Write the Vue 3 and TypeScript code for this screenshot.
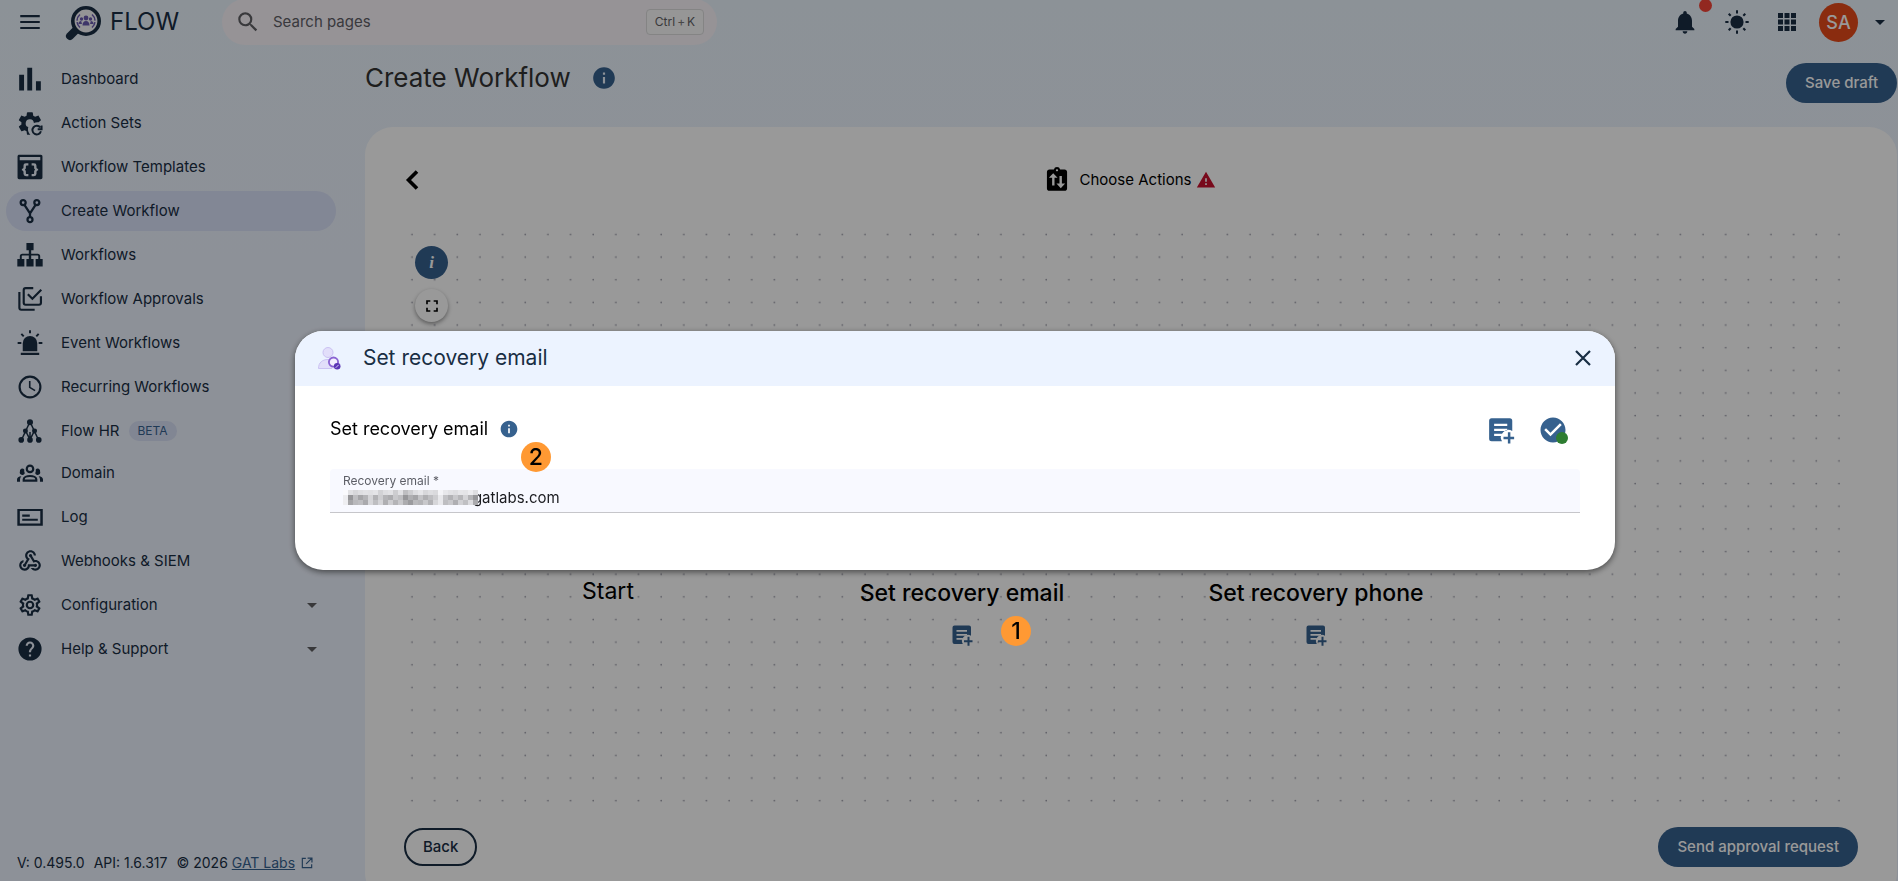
<script setup lang="ts">
import { h, ref, type FunctionalComponent } from 'vue'

interface Shape {
  d: string
  w?: number
  c?: string
}

const icons: Record<string, Shape[]> = {
  menu: [{ d: 'M3 18.500h18v-2H3zm0-5.500h18v-2H3zM3 5.500v2h18v-2z' }],
  search: [{ d: 'M15.500 14h-.79l-.28-.27A6.470 6.470 0 0 0 16 9.500 6.500 6.500 0 1 0 9.500 16c1.610 0 3.090-.59 4.230-1.570l.27.28v.79l5 4.990L20.490 19l-4.990-5zm-6 0C7.010 14 5 11.990 5 9.500S7.010 5 9.500 5 14 7.010 14 9.500 11.990 14 9.500 14z' }],
  bell: [{ d: 'M12 22c1.100 0 2-.9 2-2h-4c0 1.100.89 2 2 2zm6-6v-5c0-3.070-1.640-5.640-4.500-6.320V4c0-.83-.67-1.500-1.500-1.500s-1.500.67-1.500 1.500v.68C7.630 5.360 6 7.920 6 11v5l-2 2v1h16v-1l-2-2z' }],
  sun: [
    { d: 'M12 5.400a6.600 6.600 0 1 0 0 13.200 6.600 6.600 0 0 0 0-13.200z' },
    { d: 'M12 .3v3.200M12 20.500v3.200M.3 12h3.200M20.500 12h3.200M3.700 3.700l2 2M18.300 18.300l2 2M3.700 20.300l2-2M18.300 5.700l2-2', w: 2 },
  ],
  apps: [{ d: 'M3 3h5v5H3zM9.500 3h5v5h-5zM16 3h5v5h-5zM3 9.500h5v5H3zM9.500 9.500h5v5h-5zM16 9.500h5v5h-5zM3 16h5v5H3zM9.500 16h5v5h-5zM16 16h5v5h-5z' }],
  caret: [{ d: 'M6 9.500l6 6 6-6z' }],
  dashboard: [{ d: 'M2 8h4.500v14.500H2zM9.500 1.500H14v21H9.500zM17.500 14H22v8.500h-4.500z' }],
  actionSets: [
    { d: 'M12.300 22.800H9.800c-.3 0-.5-.2-.6-.5l-.4-2.700c-.6-.3-1.200-.6-1.700-1l-2.600 1c-.2.100-.5 0-.6-.2l-2.100-3.600c-.1-.2-.1-.5.100-.7l2.200-1.700a8 8 0 0 1 0-2L1.900 9.700c-.2-.2-.2-.4-.1-.7l2.100-3.600c.1-.2.4-.3.6-.2l2.600 1c.5-.4 1.100-.7 1.700-1l.4-2.700c.1-.3.3-.5.6-.5H14c.3 0 .5.2.6.5l.4 2.700c.6.3 1.200.6 1.700 1l2.600-1c.2-.1.5 0 .6.2L22 9c.1.2.100.5-.1.700l-2 1.600a7.500 7.500 0 0 0-4.300.6 3.800 3.800 0 1 0-5.200 3.900 7 7 0 0 0 1.900 7z' },
    { d: 'M21.500 16.200a4 4 0 1 0 .6 3.500M22.700 14.200v3.600h-3.600', w: 1.8 },
  ],
  templates: [
    { d: 'M2 .8h20c1 0 1.500.7 1.500 1.500v19.400c0 1-.7 1.500-1.500 1.500H2c-1 0-1.500-.7-1.500-1.500V2.300C.5 1.300 1.200.8 2 .8zM2.500 2.800v3h19v-3zM10.500 8.500H8.300A2.300 2.300 0 0 0 6 10.800v1.400c0 1-.6 1.500-1.500 1.500v1.600c.9 0 1.500.5 1.500 1.500v1.400a2.300 2.300 0 0 0 2.300 2.300h2.200v-2H9c-.5 0-.8-.3-.8-.8v-1.500c0-.8-.4-1.400-1-1.700.6-.3 1-.9 1-1.700v-1.500c0-.5.3-.8.8-.8h1.500zM13.500 8.500h2.200a2.300 2.300 0 0 1 2.300 2.300v1.400c0 1 .6 1.500 1.500 1.500v1.600c-.9 0-1.500.5-1.500 1.500v1.400a2.300 2.300 0 0 1-2.300 2.300h-2.200v-2H15c.5 0 .8-.3.8-.8v-1.500c0-.8.4-1.400 1-1.700-.6-.3-1-.9-1-1.700v-1.500c0-.5-.3-.8-.8-.8h-1.500z' },
  ],
  create: [
    { d: 'M3.400 4.200a2.300 2.300 0 1 0 4.600 0 2.300 2.300 0 1 0-4.600 0M16 4.200a2.300 2.300 0 1 0 4.600 0 2.300 2.300 0 1 0-4.600 0M9.700 20a2.300 2.300 0 1 0 4.600 0 2.300 2.300 0 1 0-4.600 0M6.700 6.200l5.300 8 5.300-8M12 14v3.700', w: 2.1 },
  ],
  workflows: [{ d: 'M8.700 1h6.600v6.600h-2.200v3.200h6c1.400 0 2.300.9 2.300 2.200v2.600h2.300v7h-6.500v-7h2.400V13c0-.4-.2-.6-.6-.6h-5.900v3.200h2.200v7H8.700v-7h2.200v-3.200H5c-.4 0-.6.2-.6.6v2.600h2.400v7H.3v-7h2.300V13c0-1.300.9-2.200 2.300-2.200h6V7.600H8.700z' }],
  approvals: [{ d: 'M15 1.900H8a1.800 1.800 0 0 0-1.800 1.800v11.800c0 1 .8 1.800 1.800 1.800h12.300c1 0 1.800-.8 1.800-1.800v-6M2.200 5.500v14.600c0 1 .8 1.800 1.800 1.800h12.300M10 7.600l4.200 4.200 8.200-8.400', w: 2 }],
  event: [
    { d: 'M5.300 19.500v-7.300a6.700 6.700 0 0 1 13.400 0v7.300zM3.500 21h17v2h-17z' },
    { d: 'M12 .3v2.700M.6 12H4M20 12h3.400M4 3.600l2.200 2.300M20 3.600l-2.200 2.300', w: 1.8 },
  ],
  recurring: [{ d: 'M12 1.400a10.600 10.600 0 1 0 0 21.200 10.600 10.600 0 0 0 0-21.200zM12 20.600a8.600 8.600 0 1 1 0-17.200 8.600 8.600 0 0 1 0 17.200zM12.500 6.500H11v6.300l5.300 3.200.8-1.300-4.600-2.700z' }],
  flowhr: [
    { d: 'M12 3.500L4 20.500M12 3.500l8 17M12 13v7M8 12l4 8M16 12l-4 8', w: 1.4 },
    { d: 'M9.200 4a2.800 2.800 0 1 0 5.600 0 2.800 2.800 0 1 0-5.600 0M5.500 12a2.300 2.300 0 1 0 4.600 0 2.300 2.300 0 1 0-4.600 0M13.900 12a2.300 2.300 0 1 0 4.600 0 2.300 2.300 0 1 0-4.600 0M1.300 20.200a2.600 2.600 0 1 0 5.200 0 2.600 2.600 0 1 0-5.200 0M9.400 20.200a2.600 2.600 0 1 0 5.200 0 2.600 2.600 0 1 0-5.200 0M17.500 20.200a2.600 2.600 0 1 0 5.200 0 2.600 2.600 0 1 0-5.200 0' },
  ],
  domain: [
    { d: 'M12 5.200a3 3 0 1 0 0 6 3 3 0 1 0 0-6M6.200 19v-1.200c0-1.700 2.600-3 5.800-3s5.800 1.300 5.800 3V19z', w: 2 },
    { d: 'M2.700 10.700a2.300 2.300 0 0 1 4-2 6.300 6.300 0 0 0 .5 3.500 2.300 2.300 0 0 1-4.500-1.500zM21.300 10.700a2.300 2.300 0 0 0-4-2 6.300 6.300 0 0 1-.5 3.500 2.300 2.300 0 0 0 4.500-1.500zM0 20v-2c0-1.900 1.500-2.900 4-3a4 4 0 0 0-1.200 2.800V20zM24 20v-2c0-1.900-1.500-2.900-4-3a4 4 0 0 1 1.200 2.800V20z' },
  ],
  log: [{ d: 'M.3 4.500h23.500v15.500H.3zM2.600 6.500v11.500h18.900V6.500zM4.800 9.700h7v2h-7zM4.800 13.700h14.400v1.800H4.800z' }],
  webhooks: [{ d: 'M10 15h5.880c.27-.31.67-.5 1.120-.5.83 0 1.500.67 1.500 1.500s-.67 1.500-1.500 1.500c-.44 0-.84-.19-1.120-.5H11.900c-.46 2.280-2.480 4-4.900 4-2.760 0-5-2.240-5-5 0-2.420 1.720-4.440 4-4.900v2.070C4.840 13.580 4 14.700 4 16c0 1.650 1.350 3 3 3s3-1.350 3-3v-1zm2.500-11c1.650 0 3 1.350 3 3h2c0-2.760-2.240-5-5-5s-5 2.240-5 5c0 1.430.6 2.710 1.550 3.620l-2.350 3.900c-.68.14-1.200.75-1.200 1.480 0 .83.67 1.500 1.500 1.500s1.500-.67 1.500-1.500c0-.16-.02-.31-.07-.45l3.380-5.630C10.490 9.610 9.500 8.420 9.500 7c0-1.650 1.350-3 3-3zm4.500 9c-.64 0-1.230.2-1.720.54l-3.050-5.070C11.530 8.350 11 7.740 11 7c0-.83.67-1.500 1.500-1.500S14 6.170 14 7c0 .15-.02.29-.06.43l2.190 3.650c.28-.05.57-.08.87-.08 2.760 0 5 2.240 5 5s-2.240 5-5 5c-1.850 0-3.470-1.010-4.330-2.500h2.670c.48.32 1.050.5 1.660.5 1.650 0 3-1.350 3-3s-1.350-3-3-3z' }],
  config: [{ d: 'M12 8a4 4 0 0 1 4 4 4 4 0 0 1-4 4 4 4 0 0 1-4-4 4 4 0 0 1 4-4m0 2a2 2 0 0 0-2 2 2 2 0 0 0 2 2 2 2 0 0 0 2-2 2 2 0 0 0-2-2m-2 12c-.25 0-.46-.18-.5-.42l-.37-2.650c-.63-.25-1.170-.59-1.690-.99l-2.490 1.010c-.22.08-.49 0-.61-.22l-2-3.460c-.13-.22-.07-.49.12-.64l2.110-1.660L4.500 12l.07-1-2.110-1.630c-.19-.15-.25-.42-.12-.64l2-3.460c.12-.22.39-.31.61-.22l2.490 1c.52-.39 1.060-.73 1.690-.98l.37-2.650c.04-.24.25-.42.5-.42h4c.25 0 .46.18.5.42l.37 2.650c.63.25 1.170.59 1.690.98l2.490-1c.22-.09.49 0 .61.22l2 3.460c.13.22.07.49-.12.64L19.430 11l.07 1-.07 1 2.110 1.630c.19.15.25.42.12.64l-2 3.460c-.12.22-.39.31-.61.22l-2.490-1c-.52.39-1.060.73-1.690.98l-.37 2.650c-.04.24-.25.42-.5.42h-4m1.250-18-.37 2.610c-1.200.25-2.260.89-3.030 1.780L5.440 7.350l-.75 1.300L6.800 10.200a5.550 5.550 0 0 0 0 3.600l-2.120 1.560.75 1.300 2.430-1.040c.77.88 1.820 1.520 3.010 1.760l.37 2.620h1.520l.37-2.610c1.190-.25 2.240-.89 3.010-1.770l2.430 1.040.75-1.300-2.120-1.550c.4-1.170.4-2.440 0-3.610l2.110-1.550-.75-1.300-2.410 1.040a5.420 5.420 0 0 0-3.030-1.770L12.750 4h-1.500Z' }],
  help: [{ d: 'M12 1.300a10.700 10.700 0 1 0 0 21.400 10.700 10.700 0 0 0 0-21.400zm1 17.700h-2v-2h2v2zm2.070-7.750l-.9.92C13.450 12.900 13 13.500 13 15h-2v-.5c0-1.100.45-2.100 1.170-2.830l1.240-1.260c.37-.36.59-.86.59-1.410 0-1.100-.9-2-2-2s-2 .9-2 2H8c0-2.210 1.790-4 4-4s4 1.790 4 4c0 .88-.36 1.680-.93 2.250z' }],
  info: [{ d: 'M12 2C6.480 2 2 6.480 2 12s4.480 10 10 10 10-4.480 10-10S17.520 2 12 2zm1 15h-2v-6h2v6zm0-8h-2V7h2v2z' }],
  back: [{ d: 'M15 3.500L6.500 12l8.500 8.500', w: 3.6 }],
  clipboard: [{ d: 'M19 2.300h-4.100a3 3 0 0 0-5.800 0H5c-1.300 0-2.300 1-2.300 2.200v15.300c0 1.200 1 2.200 2.300 2.200h14c1.300 0 2.300-1 2.300-2.200V4.500c0-1.200-1-2.200-2.300-2.200zm-7-.3c.6 0 1 .4 1 1s-.4 1-1 1-1-.4-1-1 .4-1 1-1zM8.500 5.800l4 4.200H9.700v7H7.500v-7h-3zM15.500 19.500l-4-4.200h2.800V8.300h2.200v7h3z' }],
  warning: [{ d: 'M1 21h22L12 2 1 21zm12-3h-2v-2h2v2zm0-4h-2v-4h2v4z' }],
  fullscreen: [{ d: 'M7 14H5v5h5v-2H7v-3zm-2-4h2V7h3V5H5v5zm12 7h-3v2h5v-5h-2v3zM14 5v2h3v3h2V5h-5z' }],
  note: [
    { d: 'M19 2.500H4.500a2 2 0 0 0-2 2V19a2 2 0 0 0 2 2h8.300a6 6 0 0 1 8.200-8.200V4.500a2 2 0 0 0-2-2zM6.500 7h10.500v1.800H6.500zM6.500 11h10.500v1.100l-2 .7H6.500zM6.500 15h6.300l-.8 1.800H6.500z' },
    { d: 'M17.500 13.800h2v3.500h3v2h-3v3.500h-2v-3.500h-3.500v-2h3.500z' },
  ],
  check: [{ d: 'M12 2C6.480 2 2 6.480 2 12s4.480 10 10 10 10-4.480 10-10S17.520 2 12 2zm-2 15l-5-5 1.410-1.410L10 14.170l7.590-7.590L19 8l-9 9z' }],
  close: [{ d: 'M5 5l14 14M19 5L5 19', w: 2.2 }],
  open: [{ d: 'M10 4H4v16h16v-6M13 3.500h7.500V11M20 4l-9.500 9.500', w: 2 }],
  user: [
    { d: 'M11 1.500a5 5 0 1 0 0 10 5 5 0 1 0 0-10M1.500 22.500c0-6 4-9 9.500-9 4.500 0 7 2 8 4.500v3.500c0 .6-.4 1-1 1z', c: '#e2defa' },
    { d: 'M11 1.500a5 5 0 1 0 0 10 5 5 0 1 0 0-10M1.500 22.500c0-6 4-9 9.500-9 4.500 0 7 2 8 4.500M1.500 22.500H15', c: '#cbc2f3', w: 1 },
    { d: 'M16.500 11.500a4.600 4.600 0 1 0 0 9.200 4.600 4.600 0 1 0 0-9.200', c: '#f3effe' },
    { d: 'M16.500 11.500a4.600 4.600 0 1 0 0 9.200 4.600 4.600 0 1 0 0-9.200', c: '#8a63d2', w: 1.800 },
    { d: 'M20.200 17a3.300 3.300 0 1 0 0 6.600 3.300 3.300 0 1 0 0-6.600', c: '#5b35b5' },
    { d: 'M18.700 21.800l3-3', c: '#d9cdf7', w: 1 },
  ],
}

const Icon: FunctionalComponent<{ name: string; size: number }> = (props) =>
  h(
    'svg',
    { viewBox: '0 0 24 24', width: props.size, height: props.size, 'aria-hidden': 'true' },
    icons[props.name].map((s) =>
      h('path', {
        d: s.d,
        fill: s.w ? 'none' : s.c ?? 'currentColor',
        'fill-rule': 'evenodd',
        stroke: s.w ? s.c ?? 'currentColor' : 'none',
        'stroke-width': s.w,
      }),
    ),
  )
Icon.props = ['name', 'size']

interface NavItem {
  label: string
  icon: string
  active?: boolean
  badge?: string
  expandable?: boolean
}

const nav: NavItem[] = [
  { label: 'Dashboard', icon: 'dashboard' },
  { label: 'Action Sets', icon: 'actionSets' },
  { label: 'Workflow Templates', icon: 'templates' },
  { label: 'Create Workflow', icon: 'create', active: true },
  { label: 'Workflows', icon: 'workflows' },
  { label: 'Workflow Approvals', icon: 'approvals' },
  { label: 'Event Workflows', icon: 'event' },
  { label: 'Recurring Workflows', icon: 'recurring' },
  { label: 'Flow HR', icon: 'flowhr', badge: 'BETA' },
  { label: 'Domain', icon: 'domain' },
  { label: 'Log', icon: 'log' },
  { label: 'Webhooks & SIEM', icon: 'webhooks' },
  { label: 'Configuration', icon: 'config', expandable: true },
  { label: 'Help & Support', icon: 'help', expandable: true },
]

const recoveryEmail = ref('gatlabs.com')

// Grey levels of the redaction mosaic, one row per 5px band.
const mosaic: number[][] = [
  [250, 225, 215, 222, 226, 224, 228, 210, 222, 226, 205, 225, 190, 205, 222, 230, 215, 222, 218, 244, 232, 226, 222, 230, 228, 236, 222],
  [236, 150, 190, 165, 180, 212, 178, 205, 180, 172, 200, 190, 150, 175, 165, 195, 175, 190, 205, 232, 195, 178, 200, 182, 212, 180, 150],
  [238, 165, 185, 190, 170, 214, 190, 212, 175, 205, 180, 200, 172, 155, 185, 180, 200, 178, 214, 232, 190, 200, 175, 208, 192, 220, 170],
]
</script>

<template>
  <div class="shell">
    <header class="topbar">
      <button class="plain menu" aria-label="Toggle menu"><Icon name="menu" :size="26" /></button>
      <a class="brand" href="#">
        <svg class="logo" viewBox="0 0 38 40" width="38" height="40" aria-hidden="true">
          <path d="M14 26L6 34" stroke="#192e44" stroke-width="8" stroke-linecap="round" />
          <circle cx="22" cy="19" r="13.200" fill="#f7f7fb" stroke="#192e44" stroke-width="3.600" />
          <g fill="#6a5bb0">
            <circle cx="22" cy="16" r="2.400" />
            <circle cx="17.500" cy="17" r="1.700" />
            <circle cx="26.500" cy="17" r="1.700" />
            <path d="M18.500 23.500c0-3 1.300-4.500 3.500-4.500s3.500 1.500 3.500 4.500zM14.500 22c0-2 1-3 2.700-3l.8 3zM29.500 22c0-2-1-3-2.700-3l-.8 3z" />
          </g>
          <path d="M16 12.500a8.500 8.500 0 0 0 0 13M28 12.500a8.500 8.500 0 0 1 0 13" fill="none" stroke="#6a5bb0" stroke-width="1.500" stroke-dasharray="7 1.500" />
        </svg>
        <span>FLOW</span>
      </a>
      <label class="search">
        <Icon name="search" :size="26" />
        <input type="search" placeholder="Search pages" aria-label="Search pages" />
        <kbd>Ctrl<i>+</i>K</kbd>
      </label>
      <div class="tools">
        <button class="plain bell" aria-label="Notifications"><Icon name="bell" :size="28" /><span class="dot"></span></button>
        <button class="plain" aria-label="Theme"><Icon name="sun" :size="24" /></button>
        <button class="plain" aria-label="Apps"><Icon name="apps" :size="24" /></button>
        <button class="plain account" aria-label="Account"><span class="avatar">SA</span><Icon name="caret" :size="20" /></button>
      </div>
    </header>

    <div class="body">
      <aside class="side">
        <nav>
          <a v-for="n in nav" :key="n.label" href="#" class="item" :class="{ active: n.active, badged: n.badge }">
            <span class="ico"><Icon :name="n.icon" :size="26" /></span>
            <span>{{ n.label }}</span>
            <span v-if="n.badge" class="badge">{{ n.badge }}</span>
            <span v-if="n.expandable" class="expand"><Icon name="caret" :size="20" /></span>
          </a>
        </nav>
        <footer class="version">
          <span>V: 0.495.0</span><span>API: 1.6.317</span><span>© 2026 <a href="#">GAT Labs</a></span><Icon name="open" :size="14" />
        </footer>
      </aside>

      <main class="main">
        <div class="heading">
          <h1>Create Workflow</h1>
          <button class="plain accent" aria-label="About this page"><Icon name="info" :size="26" /></button>
          <button class="solid">Save draft</button>
        </div>
        <section class="card">
          <div class="stepbar">
            <button class="plain black" aria-label="Previous step"><Icon name="back" :size="24" /></button>
            <div class="step">
              <Icon name="clipboard" :size="26" />
              <span>Choose Actions</span>
              <span class="warn"><Icon name="warning" :size="20" /></span>
            </div>
          </div>
          <div class="canvas">
            <svg class="grid" width="100%" height="100%" aria-hidden="true">
              <defs>
                <pattern id="dots" width="22.650" height="22.650" patternUnits="userSpaceOnUse">
                  <circle cx="12" cy="11.500" r=".8" fill="#9292a0" />
                </pattern>
              </defs>
              <rect width="100%" height="100%" fill="url(#dots)" />
            </svg>
            <div class="controls">
              <button class="round info" aria-label="Canvas help">i</button>
              <button class="round" aria-label="Fullscreen"><Icon name="fullscreen" :size="20" /></button>
            </div>
            <div class="node start">Start</div>
            <div class="node email">Set recovery email<button class="plain accent" aria-label="Add note to email action"><Icon name="note" :size="24" /></button></div>
            <div class="node phone">Set recovery phone<button class="plain accent" aria-label="Add note to phone action"><Icon name="note" :size="24" /></button></div>
          </div>
          <div class="actions">
            <button class="outline">Back</button>
            <button class="solid">Send approval request</button>
          </div>
        </section>
      </main>
    </div>

    <div class="scrim">
      <div class="dialog" role="dialog" aria-modal="true" aria-labelledby="dialog-title">
        <div class="dialog-head">
          <Icon name="user" :size="24" />
          <h2 id="dialog-title">Set recovery email</h2>
          <button class="plain" aria-label="Close"><Icon name="close" :size="24" /></button>
        </div>
        <div class="dialog-body">
          <div class="dialog-row">
            <h3>Set recovery email</h3>
            <button class="plain accent" aria-label="About recovery email"><Icon name="info" :size="20" /></button>
            <div class="dialog-tools">
              <button class="plain accent" aria-label="Add note"><Icon name="note" :size="30" /></button>
              <button class="plain accent confirm" aria-label="Confirm"><Icon name="check" :size="30" /><span></span></button>
            </div>
          </div>
          <div class="field">
            <label for="recovery">Recovery email *</label>
            <input id="recovery" v-model="recoveryEmail" type="text" />
            <svg class="mosaic" viewBox="0 0 135 15" width="135" height="15" aria-hidden="true">
              <template v-for="(row, y) in mosaic" :key="y">
                <rect v-for="(v, x) in row" :key="x" :x="x * 5" :y="y * 5" width="5" height="5" :fill="`rgb(${v},${v},${v + 3})`" />
              </template>
            </svg>
          </div>
        </div>
        <span class="marker one">1</span>
        <span class="marker two">2</span>
      </div>
    </div>
  </div>
</template>

<style>
body {
  margin: 0;
}
</style>

<style scoped>
.shell {
  display: flex;
  flex-direction: column;
  height: 100vh;
  overflow: hidden;
  font-family: Inter, "Liberation Sans", sans-serif;
  font-size: 15px;
  line-height: 20px;
  color: #192e44;
  background: linear-gradient(180deg, #eaf3fc, #ecf2fd 30%);
}
.shell * {
  box-sizing: border-box;
}
svg {
  display: block;
  flex: none;
}
button {
  font: inherit;
  cursor: pointer;
}
.plain {
  display: flex;
  align-items: center;
  padding: 0;
  border: 0;
  background: none;
  color: inherit;
}
.accent {
  color: #36618e;
}
.black {
  color: #000;
}
.topbar {
  display: flex;
  align-items: center;
  flex: none;
  height: 44px;
  padding-left: 17px;
}
.brand {
  display: flex;
  align-items: center;
  gap: 8px;
  width: 158px;
  margin-left: 21px;
  font-size: 24px;
  color: inherit;
  text-decoration: none;
}
.search {
  display: flex;
  align-items: center;
  width: 495px;
  height: 46px;
  padding: 0 13px;
  border-radius: 24px;
  background: #faf5fb;
  color: #606064;
}
.search input {
  flex: 1;
  min-width: 0;
  margin-left: 12px;
  padding: 0;
  border: 0;
  outline: 0;
  background: none;
  font: inherit;
  color: inherit;
}
.search input::placeholder {
  color: #5f5f66;
  opacity: 1;
}
.search kbd {
  width: 58px;
  height: 26px;
  border: 1px solid #dcdcdc;
  border-radius: 4px;
  background: #fafafa;
  font: 12px/24px Inter, sans-serif;
  text-align: center;
}
.search kbd i {
  margin: 0 2px;
  font-style: normal;
  color: #777;
}
.tools {
  display: flex;
  align-items: center;
  gap: 26px;
  margin-left: auto;
  padding-right: 8px;
}
.bell {
  position: relative;
}
.dot {
  position: absolute;
  top: -9px;
  right: -13px;
  width: 13px;
  height: 13px;
  border-radius: 50%;
  background: #f44336;
}
.account {
  gap: 12px;
  margin-left: -6px;
}
.avatar {
  width: 39px;
  height: 39px;
  border-radius: 50%;
  background: #e64a19;
  color: #fff;
  font-size: 18px;
  font-weight: 500;
  line-height: 39px;
}
.body {
  display: flex;
  flex: 1;
  min-height: 0;
}
.side {
  display: flex;
  flex-direction: column;
  width: 365px;
  flex: none;
  padding: 15px 29px 8px 6px;
}
.item {
  display: flex;
  align-items: center;
  height: 40px;
  margin-bottom: 4px;
  padding: 0 14px 0 11px;
  border-radius: 20px;
  color: inherit;
  text-decoration: none;
}
.item.badged {
  margin-bottom: 2px;
}
.ico {
  width: 44px;
}
.item.active {
  background: #d9e1f8;
}
.badge {
  margin-left: 9px;
  padding: 0 9px;
  border-radius: 10px;
  background: #d7dff6;
  color: #36618e;
  font-size: 12px;
}
.expand {
  margin-left: auto;
  color: #5e5e62;
}
.version {
  display: flex;
  align-items: center;
  gap: 9px;
  margin-top: auto;
  padding-left: 11px;
  font-size: 14px;
}
.version a {
  color: #36618e;
}
.version svg {
  margin-left: -4px;
  color: #36618e;
}
.main {
  display: flex;
  flex: 1;
  flex-direction: column;
  min-width: 0;
  margin: 0 1px -20px 0;
}
.heading {
  display: flex;
  align-items: center;
  gap: 20px;
  height: 83px;
  padding-bottom: 16px;
}
h1,
h2,
h3 {
  margin: 0;
  font-weight: 400;
}
h1 {
  font-size: 26px;
  line-height: 32px;
  color: #333;
}
.solid {
  height: 40px;
  padding: 0 19px;
  border: 0;
  border-radius: 20px;
  background: #36618e;
  color: #fff;
  font-weight: 500;
}
.heading .solid {
  margin: 10px 0 0 auto;
}
.card {
  display: flex;
  flex: 1;
  flex-direction: column;
  padding: 38px 39px 34px;
  border-radius: 28px;
  background: #fff;
  color: #000;
}
.stepbar {
  display: flex;
  align-items: center;
  height: 30px;
  margin-bottom: 28px;
}
.stepbar .black {
  margin-left: -2px;
}
.step {
  display: flex;
  align-items: center;
  justify-content: center;
  flex: 1;
  gap: 10px;
  padding-right: 24px;
}
.warn {
  margin-left: -5px;
  color: #c8102e;
}
.canvas {
  position: relative;
  flex: 1;
  margin: 0 8px 0 -4px;
}
.grid {
  position: absolute;
  inset: 0;
}
.controls {
  position: absolute;
  top: 23px;
  left: 15px;
  display: grid;
  gap: 10px;
}
.round {
  display: grid;
  place-items: center;
  width: 33px;
  height: 33px;
  padding: 0;
  border: 0;
  border-radius: 50%;
  background: #fff;
  box-shadow: 0 2px 4px #0006;
}
.round.info {
  background: #36618e;
  box-shadow: none;
  color: #fff;
  font: italic bold 17px/20px "Liberation Serif", serif;
}
.node {
  position: absolute;
  top: 355px;
  display: grid;
  justify-items: center;
  gap: 15px;
  width: 260px;
  font-size: 23px;
  font-weight: 500;
  line-height: 30px;
  text-align: center;
}
.start {
  top: 353px;
  left: 78px;
  font-weight: 400;
}
.email {
  left: 432px;
}
.phone {
  left: 786px;
}
.actions {
  display: flex;
  justify-content: space-between;
  align-items: center;
  height: 40px;
  margin-top: 14px;
}
.outline {
  height: 38px;
  padding: 0 17px;
  border: 2px solid #192e44;
  border-radius: 20px;
  background: none;
  color: #192e44;
  font-weight: 500;
}
.scrim {
  position: fixed;
  inset: 0;
  display: grid;
  place-items: center;
  padding: 20px 0 0 12px;
  background: #0006;
}
.dialog {
  position: relative;
  width: 70%;
  border-radius: 28px;
  background: #fff;
  box-shadow: 0 2px 6px #0008;
}
.dialog-head {
  display: flex;
  align-items: center;
  gap: 22px;
  height: 55px;
  padding: 0 20px 1px 22px;
  border-radius: 28px 28px 0 0;
  background: #ecf3ff;
}
.dialog-head h2 {
  font-size: 21px;
  line-height: 28px;
}
.dialog-head button {
  margin-left: auto;
}
.dialog-body {
  padding: 27px 35px 57px;
}
.dialog-row {
  display: flex;
  align-items: center;
  gap: 11px;
  height: 32px;
  margin-bottom: 24px;
  color: #000;
}
.dialog-row h3 {
  font-size: 18px;
  line-height: 24px;
}
.dialog-tools {
  display: flex;
  gap: 22px;
  margin: 2px 12px 0 auto;
}
.confirm {
  position: relative;
}
.confirm span {
  position: absolute;
  right: 0;
  bottom: 1px;
  width: 12px;
  height: 12px;
  border-radius: 50%;
  background: #2e7d32;
}
.field {
  position: relative;
  height: 44px;
  padding: 4px 13px 0;
  border-bottom: 1px solid #c6c6ca;
  border-radius: 4px 4px 0 0;
  background: #f8f9ff;
}
.field label {
  display: block;
  font-size: 12px;
  line-height: 15px;
  color: #5c5e66;
}
.field input {
  display: block;
  width: 100%;
  padding: 0 0 0 130px;
  border: 0;
  outline: 0;
  background: none;
  font: inherit;
  color: #1b1c20;
}
.mosaic {
  position: absolute;
  left: 13px;
  top: 21px;
}
.marker {
  position: absolute;
  width: 30px;
  height: 30px;
  border-radius: 50%;
  background: #ff9933;
  color: #000;
  font: 500 23px/30px Inter, sans-serif;
  text-align: center;
}
.one {
  left: 706px;
  top: 285px;
}
.two {
  left: 226px;
  top: 111px;
}
</style>
